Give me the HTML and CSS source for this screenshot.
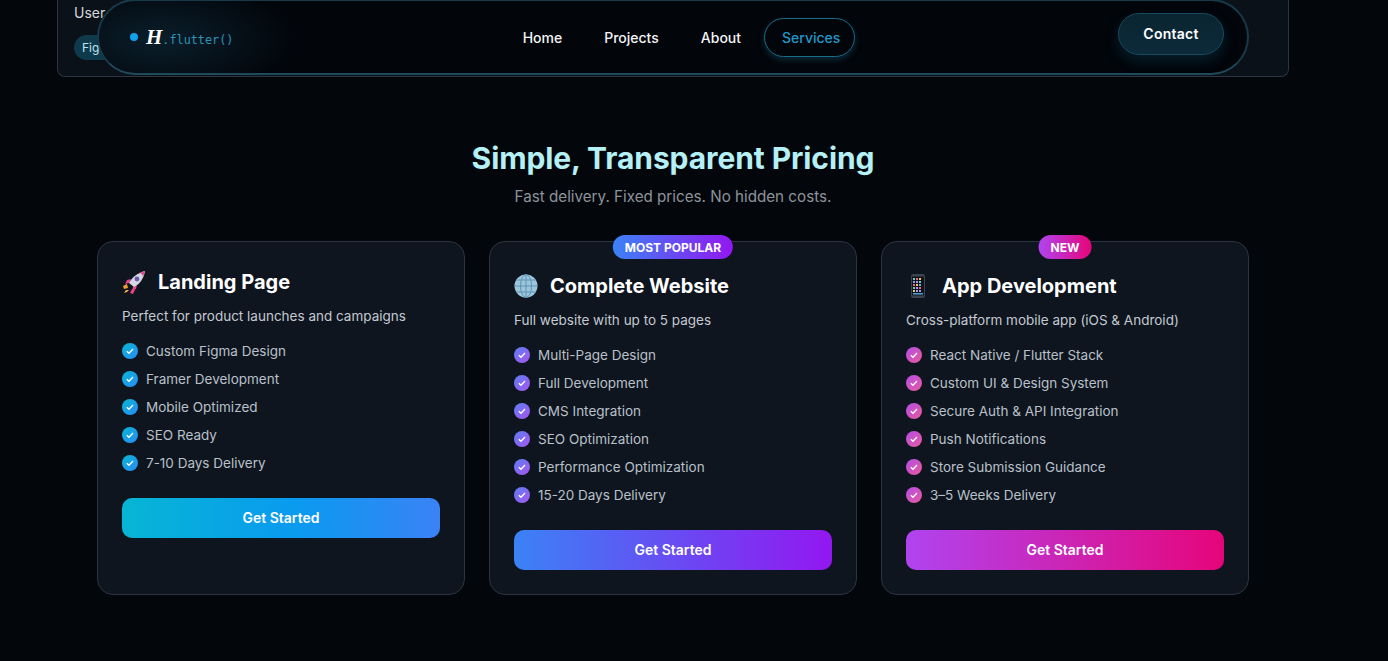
FILE: index.html
```html
<!DOCTYPE html>
<html lang="en">
<head>
    <meta charset="UTF-8">
    <meta name="viewport" content="width=device-width, initial-scale=1.0">
    <title>Pricing</title>
    <link rel="stylesheet" href="styles.css">
</head>
<body>
    <nav class="nav">
        <div class="logo">
            <span class="logo-dot"></span>
            <span class="logo-h">H</span>
            <span class="logo-code">.flutter()</span>
        </div>
        <div class="nav-links">
            <a class="nav-link">Home</a>
            <a class="nav-link">Projects</a>
            <a class="nav-link">About</a>
            <a class="nav-link active">Services</a>
        </div>
        <a class="contact-btn">Contact</a>
    </nav>

    <div class="prev-card">
        <div class="prev-label">User</div>
        <span class="prev-chip">Figma</span>
    </div>

    <section class="pricing">
        <h2 class="pricing-title">Simple, Transparent Pricing</h2>
        <p class="pricing-sub">Fast delivery. Fixed prices. No hidden costs.</p>

        <div class="plans">
            <div class="plan plan-blue">
                <div class="plan-head">
                    <svg class="plan-icon" viewBox="0 0 24 24">
                        <path d="M5 14 1 16l1 3 4-1z" fill="#f0a030"/>
                        <path d="M10 19l-2 4 3 1 2-4z" fill="#e8408a"/>
                        <path d="M4 20l-2 3 3-1 2-2z" fill="#f4b040"/>
                        <path d="M7 13 3 14l2-4 4-1z" fill="#e8408a"/>
                        <path d="M11 17l-1 4 4-2 1-4z" fill="#e8408a"/>
                        <path d="M7 13C10 7 16 3 23 1c-1 7-5 13-11 16z" fill="#d5d8e2"/>
                        <path d="M17 3c2 0 4 2 4 4l2-6z" fill="#e04a90"/>
                        <circle cx="15" cy="9" r="2.4" fill="#6a5aa8"/>
                    </svg>
                    <h3 class="plan-name">Landing Page</h3>
                </div>
                <p class="plan-desc">Perfect for product launches and campaigns</p>
                <ul class="plan-list">
                    <li><span class="check"><svg viewBox="0 0 16 16"><path d="M4.8 8.2l2.2 2.1 4-4.3"/></svg></span>Custom Figma Design</li>
                    <li><span class="check"><svg viewBox="0 0 16 16"><path d="M4.8 8.2l2.2 2.1 4-4.3"/></svg></span>Framer Development</li>
                    <li><span class="check"><svg viewBox="0 0 16 16"><path d="M4.8 8.2l2.2 2.1 4-4.3"/></svg></span>Mobile Optimized</li>
                    <li><span class="check"><svg viewBox="0 0 16 16"><path d="M4.8 8.2l2.2 2.1 4-4.3"/></svg></span>SEO Ready</li>
                    <li><span class="check"><svg viewBox="0 0 16 16"><path d="M4.8 8.2l2.2 2.1 4-4.3"/></svg></span>7-10 Days Delivery</li>
                </ul>
                <a class="plan-btn">Get Started</a>
            </div>

            <div class="plan plan-purple has-badge">
                <span class="badge">MOST POPULAR</span>
                <div class="plan-head">
                    <svg class="plan-icon" viewBox="0 0 24 24">
                        <circle cx="12" cy="12" r="11.5" fill="#9cc6dc"/>
                        <g fill="none" stroke="#5f93b4" stroke-width="1">
                            <ellipse cx="12" cy="12" rx="5.5" ry="11.5"/>
                            <path d="M12 .5v23M.5 12h23M2.4 6h19.2M2.4 18h19.2"/>
                        </g>
                    </svg>
                    <h3 class="plan-name">Complete Website</h3>
                </div>
                <p class="plan-desc">Full website with up to 5 pages</p>
                <ul class="plan-list">
                    <li><span class="check"><svg viewBox="0 0 16 16"><path d="M4.8 8.2l2.2 2.1 4-4.3"/></svg></span>Multi-Page Design</li>
                    <li><span class="check"><svg viewBox="0 0 16 16"><path d="M4.8 8.2l2.2 2.1 4-4.3"/></svg></span>Full Development</li>
                    <li><span class="check"><svg viewBox="0 0 16 16"><path d="M4.8 8.2l2.2 2.1 4-4.3"/></svg></span>CMS Integration</li>
                    <li><span class="check"><svg viewBox="0 0 16 16"><path d="M4.8 8.2l2.2 2.1 4-4.3"/></svg></span>SEO Optimization</li>
                    <li><span class="check"><svg viewBox="0 0 16 16"><path d="M4.8 8.2l2.2 2.1 4-4.3"/></svg></span>Performance Optimization</li>
                    <li><span class="check"><svg viewBox="0 0 16 16"><path d="M4.8 8.2l2.2 2.1 4-4.3"/></svg></span>15-20 Days Delivery</li>
                </ul>
                <a class="plan-btn">Get Started</a>
            </div>

            <div class="plan plan-pink has-badge">
                <span class="badge">NEW</span>
                <div class="plan-head">
                    <svg class="plan-icon" viewBox="0 0 24 24">
                        <rect x="5" y="0" width="14" height="24" rx="2.5" fill="#3b4450"/>
                        <rect x="6" y="2.5" width="12" height="19" fill="#10151c"/>
                        <g fill="#6fd0c0"><rect x="7" y="4" width="2" height="2"/><rect x="13" y="7" width="2" height="2"/><rect x="7" y="13" width="2" height="2"/></g>
                        <g fill="#e86a8a"><rect x="10" y="4" width="2" height="2"/><rect x="7" y="10" width="2" height="2"/><rect x="13" y="13" width="2" height="2"/></g>
                        <g fill="#e8c860"><rect x="13" y="4" width="2" height="2"/><rect x="10" y="10" width="2" height="2"/><rect x="7" y="16" width="2" height="2"/></g>
                        <g fill="#7ea8f0"><rect x="7" y="7" width="2" height="2"/><rect x="13" y="10" width="2" height="2"/><rect x="10" y="16" width="2" height="2"/></g>
                        <g fill="#c08ae8"><rect x="10" y="7" width="2" height="2"/><rect x="10" y="13" width="2" height="2"/><rect x="13" y="16" width="2" height="2"/></g>
                        <rect x="7" y="19" width="10" height="1.6" fill="#4a9ad0"/>
                    </svg>
                    <h3 class="plan-name">App Development</h3>
                </div>
                <p class="plan-desc">Cross-platform mobile app (iOS &amp; Android)</p>
                <ul class="plan-list">
                    <li><span class="check"><svg viewBox="0 0 16 16"><path d="M4.8 8.2l2.2 2.1 4-4.3"/></svg></span>React Native / Flutter Stack</li>
                    <li><span class="check"><svg viewBox="0 0 16 16"><path d="M4.8 8.2l2.2 2.1 4-4.3"/></svg></span>Custom UI &amp; Design System</li>
                    <li><span class="check"><svg viewBox="0 0 16 16"><path d="M4.8 8.2l2.2 2.1 4-4.3"/></svg></span>Secure Auth &amp; API Integration</li>
                    <li><span class="check"><svg viewBox="0 0 16 16"><path d="M4.8 8.2l2.2 2.1 4-4.3"/></svg></span>Push Notifications</li>
                    <li><span class="check"><svg viewBox="0 0 16 16"><path d="M4.8 8.2l2.2 2.1 4-4.3"/></svg></span>Store Submission Guidance</li>
                    <li><span class="check"><svg viewBox="0 0 16 16"><path d="M4.8 8.2l2.2 2.1 4-4.3"/></svg></span>3–5 Weeks Delivery</li>
                </ul>
                <a class="plan-btn">Get Started</a>
            </div>
        </div>
    </section>
</body>
</html>
```

FILE: styles.css
```css
* { box-sizing: border-box; }

html, body {
    height: 661px;
    overflow: hidden;
}

body {
    margin: 0;
    background: #03070b;
    color: #fff;
    font-family: Inter, "Liberation Sans", sans-serif;
    position: relative;
}

/* floating nav */
.nav {
    position: absolute;
    top: -1px;
    left: 97px;
    width: 1152px;
    height: 76px;
    display: flex;
    align-items: center;
    justify-content: space-between;
    padding: 0 23px 0 31px;
    border: 2px solid #173a4a;
    border-bottom-color: #1f4a5c;
    border-radius: 38px;
    background:
        radial-gradient(ellipse 140px 60px at 60px 38px, #0a1e2b 0%, rgba(10, 30, 43, 0) 100%),
        #02050a;
    z-index: 10;
}

.logo {
    display: flex;
    align-items: baseline;
    width: 106px;
}

.logo-dot {
    width: 8px;
    height: 8px;
    border-radius: 50%;
    background: #12a0ee;
    margin-right: 8px;
    align-self: center;
}

.logo-h {
    font-family: "Liberation Serif", serif;
    font-weight: 700;
    font-style: italic;
    font-size: 21px;
}

.logo-code {
    font-family: "DejaVu Sans Mono", monospace;
    font-size: 11.8px;
    color: #2f93b4;
}

.nav-links {
    display: flex;
    gap: 8px;
    margin-left: 7px;
}

.nav-link {
    padding: 0 16px;
    height: 39px;
    display: flex;
    align-items: center;
    border: 1px solid transparent;
    border-radius: 20px;
    font-size: 14px;
    font-weight: 500;
    color: #f2f4f6;
}

.nav-link.active {
    margin-left: -2px;
    padding: 0 14px 0 17px;
    color: #2298c8;
    border: 1px solid #1b6c88;
    box-shadow: 0 3px 6px rgba(24, 110, 140, 0.35);
}

.contact-btn {
    width: 106px;
    height: 42px;
    display: flex;
    align-items: center;
    justify-content: center;
    padding-bottom: 1px;
    border: 1px solid #184a5e;
    border-radius: 21px;
    background: linear-gradient(180deg, #0a2531, #0c2a3a);
    box-shadow: 0 6px 14px rgba(16, 90, 120, 0.3);
    font-size: 14px;
    font-weight: 600;
    letter-spacing: 0.25px;
    margin-top: -6px;
}

/* end of the section scrolled under the nav */
.prev-card {
    margin-left: 57px;
    width: 1232px;
    height: 77px;
    padding: 4px 16px 0;
    border: 1px solid #2c3540;
    border-top: none;
    border-radius: 0 0 8px 8px;
    background: #0b1119;
}

.prev-label {
    font-size: 14px;
    line-height: 17px;
    color: #d5d8dd;
}

.prev-chip {
    display: inline-block;
    margin-top: 14px;
    padding: 0 8px;
    height: 25px;
    line-height: 25px;
    border-radius: 13px;
    background: #0e3a4c;
    color: #c0e4f0;
    font-size: 12px;
}

/* pricing */
.pricing {
    width: 1152px;
    margin-left: 97px;
    padding-top: 62px;
}

.pricing-title {
    margin: 0;
    text-align: center;
    font-size: 30px;
    line-height: 38px;
    font-weight: 700;
    letter-spacing: -0.1px;
    color: #b4f0f6;
}

.pricing-sub {
    margin: 10px 0 0;
    text-align: center;
    font-size: 15.2px;
    line-height: 20px;
    color: #8d939b;
}

.plans {
    display: grid;
    grid-template-columns: repeat(3, 368px);
    gap: 24px;
    margin-top: 34px;
}

.plan {
    position: relative;
    height: 354px;
    padding: 24px;
    border: 1px solid #2b3440;
    border-radius: 16px;
    background: #0e151f;
}

.plan.has-badge { padding-top: 28px; }

.badge {
    position: absolute;
    top: -7px;
    left: 50%;
    transform: translateX(-50%);
    height: 24px;
    padding: 0 12px;
    display: flex;
    align-items: center;
    border-radius: 12px;
    font-size: 12px;
    font-weight: 700;
    white-space: nowrap;
}

.plan-head {
    display: flex;
    align-items: center;
    gap: 12px;
    height: 32px;
}

.plan-icon {
    width: 24px;
    height: 24px;
    flex: none;
}

.plan-name {
    margin: 0;
    font-size: 20px;
    font-weight: 700;
}

.plan-desc {
    margin: 8px 0 0;
    font-size: 13.5px;
    line-height: 20px;
    color: #c4c9d1;
}

.plan-list {
    list-style: none;
    margin: 11px 0 0;
    padding: 0;
}

.plan-list li {
    display: flex;
    align-items: center;
    gap: 8px;
    height: 28px;
    font-size: 13.5px;
    color: #bac0c9;
}

.check {
    width: 16px;
    height: 16px;
    border-radius: 50%;
    flex: none;
}

.check svg {
    display: block;
    width: 16px;
    height: 16px;
    fill: none;
    stroke: #fff;
    stroke-width: 1.3;
}

.plan-btn {
    display: flex;
    align-items: center;
    justify-content: center;
    height: 40px;
    padding-bottom: 2px;
    margin-top: 21px;
    border-radius: 10px;
    font-size: 14px;
    font-weight: 600;
}

.plan-blue .check { background: linear-gradient(135deg, #06b6d4, #2a8cf5); }
.plan-blue .plan-btn { background: linear-gradient(90deg, #06b6d4, #0a9af0 55%, #3b82f6); }

.plan-purple .check { background: linear-gradient(135deg, #5b7ff5, #a855f0); }
.plan-purple .plan-btn,
.plan-purple .badge { background: linear-gradient(90deg, #3b82f6, #9317f0); }

.plan-pink .check { background: linear-gradient(135deg, #b34de8, #e85a9c); }
.plan-pink .plan-btn,
.plan-pink .badge { background: linear-gradient(90deg, #b044f0, #e6057a); }
```
